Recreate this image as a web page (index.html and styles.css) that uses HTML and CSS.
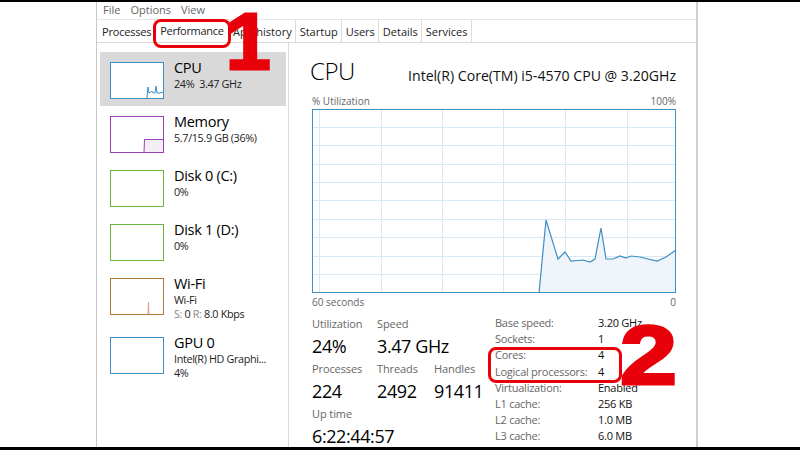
FILE: index.html
```html
<!DOCTYPE html>
<html>
<head>
<meta charset="utf-8">
<title>Task Manager - Performance</title>
<link rel="stylesheet" href="styles.css">
</head>
<body>
<div class="frame">
  <div class="gutter left"></div>
  <div class="window">
    <div class="menubar"><span>File</span><span>Options</span><span>View</span></div>
    <div class="tabs">
      <div class="tab first">Processes</div>
      <div class="tab active">Performance</div>
      <div class="tab">App history</div>
      <div class="tab">Startup</div>
      <div class="tab">Users</div>
      <div class="tab">Details</div>
      <div class="tab">Services</div>
    </div>
    <div class="content">
      <div class="sidebar">
        <div class="item selected">
          <svg class="thumb cpu" viewBox="0 0 54 37" width="54" height="37">
            <rect x="0.5" y="0.5" width="53" height="36" fill="#fff" stroke="#3d8fc4"/>
            <polyline points="37,36 38,25 39,31 41,30 42,29 43,31 45,31 46,24 47,31 50,31 53,30" fill="none" stroke="#3d8fc4" stroke-width="1"/>
          </svg>
          <div class="itext"><div class="ititle">CPU</div><div class="isub">24%&nbsp; 3.47 GHz</div></div>
        </div>
        <div class="item">
          <svg class="thumb" viewBox="0 0 54 37" width="54" height="37">
            <rect x="0.5" y="0.5" width="53" height="36" fill="#fff" stroke="#9b3fb5"/>
            <path d="M34,36 L34.5,23.5 L53,23.5 L53,36 Z" fill="#f3eef5" stroke="none"/>
            <polyline points="34,36 34.5,23.5 53,23.5" fill="none" stroke="#9b3fb5"/>
          </svg>
          <div class="itext"><div class="ititle">Memory</div><div class="isub">5.7/15.9 GB (36%)</div></div>
        </div>
        <div class="item">
          <svg class="thumb" viewBox="0 0 54 37" width="54" height="37">
            <rect x="0.5" y="0.5" width="53" height="36" fill="#fff" stroke="#6cb33f"/>
          </svg>
          <div class="itext"><div class="ititle">Disk 0 (C:)</div><div class="isub">0%</div></div>
        </div>
        <div class="item">
          <svg class="thumb" viewBox="0 0 54 37" width="54" height="37">
            <rect x="0.5" y="0.5" width="53" height="36" fill="#fff" stroke="#6cb33f"/>
          </svg>
          <div class="itext"><div class="ititle">Disk 1 (D:)</div><div class="isub">0%</div></div>
        </div>
        <div class="item">
          <svg class="thumb" viewBox="0 0 54 37" width="54" height="37">
            <rect x="0.5" y="0.5" width="53" height="36" fill="#fff" stroke="#b07a3c"/>
            <polyline points="38,36 38.5,24 39,36" fill="#f5dcd6" stroke="#e0a095"/>
          </svg>
          <div class="itext"><div class="ititle">Wi-Fi</div><div class="isub">Wi-Fi</div><div class="isub"><span class="muted">S:</span> 0 <span class="muted">R:</span> 8.0 Kbps</div></div>
        </div>
        <div class="item">
          <svg class="thumb" viewBox="0 0 54 37" width="54" height="37">
            <rect x="0.5" y="0.5" width="53" height="36" fill="#fff" stroke="#3d8fc4"/>
          </svg>
          <div class="itext"><div class="ititle">GPU 0</div><div class="isub">Intel(R) HD Graphi...</div><div class="isub">4%</div></div>
        </div>
      </div>
      <div class="panel">
        <div class="header">
          <div class="ptitle">CPU</div>
          <div class="pmodel">Intel(R) Core(TM) i5-4570 CPU @ 3.20GHz</div>
        </div>
        <div class="axis"><span>% Utilization</span><span>100%</span></div>
        <svg class="graph" viewBox="0 0 364 184" width="364" height="184">
          <g stroke="#d9e9f3" stroke-width="1">
            <line x1="7.5" y1="0" x2="7.5" y2="184"/>
            <line x1="69.5" y1="0" x2="69.5" y2="184"/>
            <line x1="130.5" y1="0" x2="130.5" y2="184"/>
            <line x1="191.5" y1="0" x2="191.5" y2="184"/>
            <line x1="253.5" y1="0" x2="253.5" y2="184"/>
            <line x1="315.5" y1="0" x2="315.5" y2="184"/>
            <line x1="0" y1="18.5" x2="364" y2="18.5"/>
            <line x1="0" y1="36.5" x2="364" y2="36.5"/>
            <line x1="0" y1="55.5" x2="364" y2="55.5"/>
            <line x1="0" y1="73.5" x2="364" y2="73.5"/>
            <line x1="0" y1="91.5" x2="364" y2="91.5"/>
            <line x1="0" y1="110.5" x2="364" y2="110.5"/>
            <line x1="0" y1="128.5" x2="364" y2="128.5"/>
            <line x1="0" y1="147.5" x2="364" y2="147.5"/>
            <line x1="0" y1="165.5" x2="364" y2="165.5"/>
          </g>
          <path d="M227,184 L234,111 L246,150 L253,143 L259,152 L271,151 L278,153 L283,150 L289,119 L294,150 L301,150 L308,147 L314,149 L319,147 L328,148 L345,152 L354,148 L364,141 L364,184 Z" fill="#eef4f9" stroke="none"/>
          <polyline points="227,184 234,111 246,150 253,143 259,152 271,151 278,153 283,150 289,119 294,150 301,150 308,147 314,149 319,147 328,148 345,152 354,148 364,141" fill="none" stroke="#3d8fc4" stroke-width="1.2"/>
          <rect x="0.5" y="0.5" width="363" height="183" fill="none" stroke="#3d8fc4"/>
        </svg>
        <div class="axis bottom"><span>60 seconds</span><span>0</span></div>
        <div class="stats">
          <div class="live">
            <div class="cell"><div class="slabel">Utilization</div><div class="svalue">24%</div></div>
            <div class="cell"><div class="slabel">Speed</div><div class="svalue">3.47 GHz</div></div>
            <div class="cell"></div>
            <div class="cell"><div class="slabel">Processes</div><div class="svalue">224</div></div>
            <div class="cell"><div class="slabel">Threads</div><div class="svalue">2492</div></div>
            <div class="cell"><div class="slabel">Handles</div><div class="svalue">91411</div></div>
            <div class="cell wide"><div class="slabel">Up time</div><div class="svalue">6:22:44:57</div></div>
          </div>
          <dl class="specs">
            <dt>Base speed:</dt><dd>3.20 GHz</dd>
            <dt>Sockets:</dt><dd>1</dd>
            <dt>Cores:</dt><dd>4</dd>
            <dt>Logical processors:</dt><dd>4</dd>
            <dt>Virtualization:</dt><dd>Enabled</dd>
            <dt>L1 cache:</dt><dd>256 KB</dd>
            <dt>L2 cache:</dt><dd>1.0 MB</dd>
            <dt>L3 cache:</dt><dd>6.0 MB</dd>
          </dl>
        </div>
      </div>
    </div>
  </div>
  <div class="gutter"></div>
</div>
<div class="callout callout1"></div>
<div class="bignum num1">1</div>
<div class="callout callout2"></div>
<div class="bignum num2">2</div>
</body>
</html>
```

FILE: styles.css
```css
* { box-sizing: border-box; }
html, body { margin: 0; padding: 0; }
body {
  width: 800px;
  height: 450px;
  overflow: hidden;
  background: #fff;
  border-top: 2px solid #000;
  border-bottom: 3px solid #000;
  font-family: "Open Sans", "Noto Sans", sans-serif;
  color: #000;
  position: relative;
}
.frame { display: flex; height: 445px; }
.gutter { flex: 1; background: #fff; }
.gutter.left { flex: none; width: 96px; }
.window {
  width: 602px;
  flex: none;
  border-left: 1px solid #c9c9c9;
  border-right: 2px solid #cfcfcf;
  display: flex;
  flex-direction: column;
}
.menubar {
  height: 18px;
  border-bottom: 1px solid #e6e6e6;
  display: flex;
  gap: 10px;
  padding-left: 6px;
  font-size: 11px;
  line-height: 16px;
  color: #666;
}
.tabs {
  height: 23px;
  display: flex;
  border-bottom: 1px solid #d9d9d9;
  padding-left: 2px;
}
.tab {
  font-size: 11px;
  line-height: 22px;
  padding: 1px 3.5px 0 3.5px;
  border-right: 1px solid #dcdcdc;
  color: #222;
  letter-spacing: 0;
}
.tab.first { padding: 1px 3px 0 3px; letter-spacing: -0.2px; }
.tab.active { background: #fff; padding: 0 5px; letter-spacing: -0.3px; }
.content { flex: 1; display: flex; min-height: 0; }
.sidebar {
  width: 192px;
  flex: none;
  border-right: 1px solid #dadada;
  padding: 9px 2px 0 3px;
}
.item {
  display: flex;
  gap: 10px;
  padding: 10px 0 0 10px;
}
.item.selected { background: #d9d9d9; }
.thumb { flex: none; display: block; margin-bottom: 7px; }
.itext { margin-top: -3px; padding-bottom: 6px; white-space: nowrap; }
.ititle { font-size: 14.5px; line-height: 18px; letter-spacing: -0.3px; }
.isub { font-size: 10.8px; line-height: 14px; color: #222; letter-spacing: -0.35px; }
.muted { color: #888; }
.panel {
  flex: 1;
  padding: 12px 20px 0 23px;
}
.header {
  display: flex;
  justify-content: space-between;
  align-items: baseline;
  height: 37px;
}
.ptitle { font-size: 24px; font-weight: 300; line-height: 32px; letter-spacing: -0.5px; margin-left: -2px; }
.pmodel { font-size: 14.1px; line-height: 20px; color: #111; position: relative; top: 1px; }
.axis {
  display: flex;
  justify-content: space-between;
  font-size: 10px;
  line-height: 14px;
  color: #666;
  margin-bottom: 1px;
  margin-top: 2px;
}
.axis.bottom { margin-top: 2px; margin-bottom: 0; }
.graph { display: block; }
.stats { display: flex; align-items: flex-start; margin-top: 6px; }
.live {
  width: 183px;
  display: grid;
  grid-template-columns: 65px 57px auto;
  white-space: nowrap;
}
.cell.wide { grid-column: 1 / 4; }
.slabel { font-size: 11px; line-height: 17px; color: #666; letter-spacing: -0.1px; }
.svalue { font-size: 18px; line-height: 28px; color: #000; letter-spacing: -0.4px; }
.specs {
  margin: 0;
  display: grid;
  align-content: start;
  grid-template-columns: 103px auto;
  font-size: 11px;
  line-height: 16.2px;
  letter-spacing: -0.25px;
  white-space: nowrap;
}
.specs dt { color: #666; }
.specs dd { margin: 0; color: #111; }
.callout {
  position: absolute;
  border: 3px solid #e8000b;
  border-radius: 8px;
}
.callout1 { left: 153px; top: 17px; width: 78px; height: 29px; }
.callout2 { left: 488px; top: 345px; width: 134px; height: 36px; }
.bignum {
  position: absolute;
  font-family: "Liberation Sans", Arial, sans-serif;
  font-weight: bold;
  color: #e8000b;
  -webkit-text-stroke: 3px #e8000b;
  line-height: 1;
}
.num1 { left: 226px; top: 0; font-size: 80px; }
.num2 { left: 620px; top: 311px; font-size: 84px; transform: scaleX(1.22); transform-origin: left top; }
```
